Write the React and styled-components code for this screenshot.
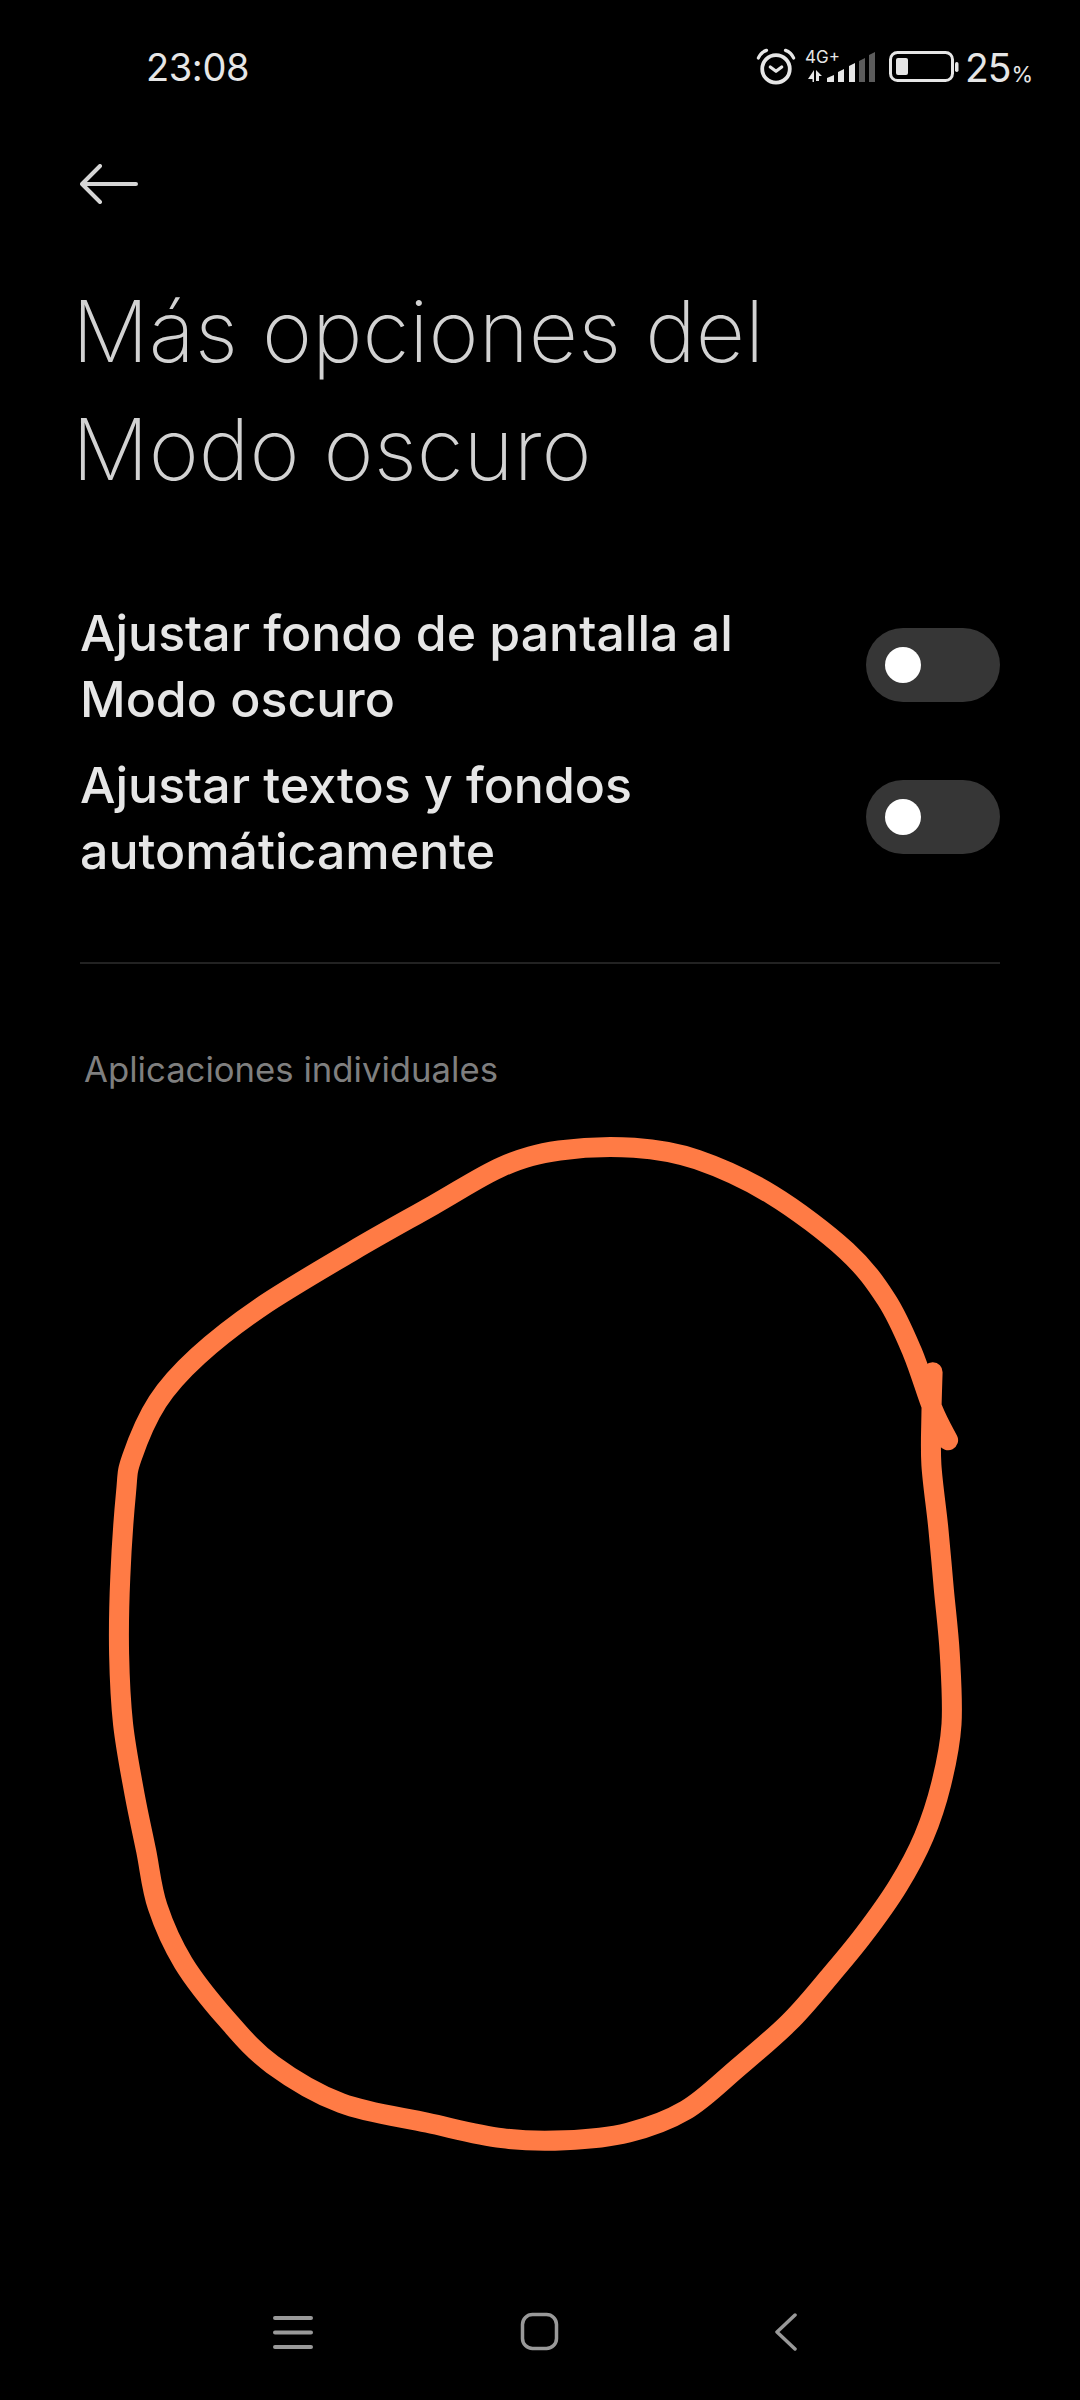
import React from "react";
import styled, { createGlobalStyle } from "styled-components";

const Global = createGlobalStyle`
  html, body { margin: 0; padding: 0; background: #000; }
  #root { width: 1080px; height: 2400px; }
`;

const FONT = `Inter, "Noto Sans", "Liberation Sans", sans-serif`;

const Page = styled.div`
  position: relative;
  width: 1080px;
  height: 2400px;
  background: #000;
  font-family: ${FONT};
  display: flex;
  flex-direction: column;
  overflow: hidden;
`;

const StatusBar = styled.div`
  height: 134px;
  padding: 0 48px 0 146px;
  box-sizing: border-box;
  display: flex;
  align-items: center;
  justify-content: space-between;
  color: #e6e6e6;
`;

const Clock = styled.span`
  font-size: 38px;
  font-weight: 400;
  letter-spacing: -0.4px;
`;

const StatusIcons = styled.div`
  display: flex;
  align-items: center;
`;

const Percent = styled.span`
  font-size: 39px;
  font-weight: 400;
  letter-spacing: -1px;
  margin-left: 6px;
  & > small {
    font-size: 22px;
    margin-left: 1px;
  }
`;

const BackRow = styled.div`
  height: 98px;
  padding: 2px 0 0 80px;
  box-sizing: border-box;
  display: flex;
  align-items: center;
`;

const Title = styled.h1`
  margin: 40px 0 0 72px;
  font-size: 85.5px;
  line-height: 118px;
  font-weight: 200;
  color: #d2d2d2;
`;

const Options = styled.div`
  margin-top: 92px;
  padding: 0 80px;
  display: flex;
  flex-direction: column;
  gap: 20px;
`;

const Option = styled.div`
  display: flex;
  align-items: center;
  justify-content: space-between;
`;

const OptionText = styled.div`
  font-size: 50px;
  line-height: 66px;
  font-weight: 500;
  color: #e6e6e6;
`;

const Toggle = styled.div`
  width: 134px;
  height: 74px;
  margin-bottom: 2px;
  border-radius: 37px;
  background: #363636;
  display: flex;
  align-items: center;
  padding-left: 19px;
  box-sizing: border-box;
`;

const Knob = styled.div`
  width: 36px;
  height: 36px;
  border-radius: 50%;
  background: #fff;
`;

const Divider = styled.div`
  height: 2px;
  margin: 78px 80px 0;
  background: #222;
`;

const SectionLabel = styled.div`
  margin: 83px 0 0 84px;
  font-size: 34.7px;
  line-height: 44px;
  color: #7f7f7f;
`;

const Scribble = styled.svg`
  position: absolute;
  left: 0;
  top: 0;
  width: 1080px;
  height: 2400px;
  pointer-events: none;
`;

const NavBar = styled.div`
  position: absolute;
  left: 0;
  bottom: 0;
  width: 100%;
  height: 110px;
  color: #999;
`;

const NavIcon = styled.svg`
  position: absolute;
  top: ${(p) => p.$top}px;
  left: ${(p) => p.$left}px;
`;

const zoomPts = [
  [1520, 388], [1518, 450], [1518, 520], [1530, 610], [1540, 700], [1550, 790], [1553, 890],
  [1535, 975], [1505, 1050], [1460, 1120], [1400, 1190], [1340, 1250], [1270, 1315],
  [1180, 1380], [1090, 1440], [990, 1472], [880, 1483], [770, 1480], [640, 1458], [490, 1430],
  [370, 1375], [290, 1310], [215, 1230], [170, 1150], [150, 1070], [130, 990], [110, 890],
  [103, 790], [105, 680], [115, 560], [125, 510], [170, 430], [240, 365], [350, 295], [510, 215],
  [650, 150], [770, 95], [870, 72], [1000, 68], [1110, 85], [1240, 135], [1370, 215], [1440, 285],
  [1485, 360], [1520, 440], [1547, 485],
];

function smoothPath(zp) {
  const p = zp.map(([x, y]) => [60 + x / 1.742, 1100 + y / 1.4255]);
  let d = `M${p[0][0].toFixed(1)} ${p[0][1].toFixed(1)}`;
  for (let i = 0; i < p.length - 1; i++) {
    const a = p[Math.max(i - 1, 0)], b = p[i], c = p[i + 1], e = p[Math.min(i + 2, p.length - 1)];
    d += ` C${(b[0] + (c[0] - a[0]) / 6).toFixed(1)} ${(b[1] + (c[1] - a[1]) / 6).toFixed(1)} ${(c[0] - (e[0] - b[0]) / 6).toFixed(1)} ${(c[1] - (e[1] - b[1]) / 6).toFixed(1)} ${c[0].toFixed(1)} ${c[1].toFixed(1)}`;
  }
  return d;
}

const Alarm = () => (
  <svg width="40" height="38" viewBox="0 0 42 40" fill="none" stroke="#e6e6e6" strokeLinecap="round" strokeLinejoin="round">
    <circle cx="21" cy="22" r="14.5" strokeWidth="4" />
    <path d="M15 20l6 4.5 6-4.5" strokeWidth="3.4" />
    <path d="M2.5 10.5Q5 4.5 11 2.5M39.5 10.5Q37 4.5 31 2.5" strokeWidth="3.4" />
  </svg>
);

const SignalSvg = styled.svg`
  margin: 0 0 3px 9px;
  overflow: visible;
`;

const Signal = () => (
  <SignalSvg width="70" height="36" viewBox="0 0 70 36">
    <text x="0" y="15" fontSize="17" fontFamily="Inter, sans-serif" fill="#e6e6e6">4G+</text>
    <path d="M9 22v12H7.5v-3H3zM11 22l6 6h-3v5h-3z" fill="#e6e6e6" />
    <path d="M22 34v-4l7-3v7zM33 34V24l6-3v13zM44 34V18l6-3v19z" fill="#e6e6e6" />
    <path d="M54 34V13l6-3v24zM64 34V7l6-3v30z" fill="#5c5c5c" />
  </SignalSvg>
);

const BatterySvg = styled.svg`
  margin-left: 14px;
`;

const Battery = () => (
  <BatterySvg width="70" height="32" viewBox="0 0 70 32" fill="none">
    <rect x="1.5" y="1.5" width="62" height="28" rx="7" stroke="#e6e6e6" strokeWidth="3" />
    <rect x="7" y="7" width="12" height="17" rx="2" fill="#e6e6e6" />
    <rect x="66" y="11" width="3.5" height="10" rx="1.7" fill="#e6e6e6" />
  </BatterySvg>
);

export default function App() {
  return (
    <Page>
      <Global />
      <StatusBar>
        <Clock>23:08</Clock>
        <StatusIcons>
          <Alarm />
          <Signal />
          <Battery />
          <Percent>25<small>%</small></Percent>
        </StatusIcons>
      </StatusBar>
      <BackRow>
        <svg width="58" height="40" viewBox="0 0 58 40" fill="none" stroke="#d6d6d6" strokeWidth="4" strokeLinecap="round" strokeLinejoin="round">
          <path d="M56 20H2M20 2L2 20l18 18" />
        </svg>
      </BackRow>
      <Title>Más opciones del<br />Modo oscuro</Title>
      <Options>
        <Option>
          <OptionText>Ajustar fondo de pantalla al<br />Modo oscuro</OptionText>
          <Toggle><Knob /></Toggle>
        </Option>
        <Option>
          <OptionText>Ajustar textos y fondos<br />automáticamente</OptionText>
          <Toggle><Knob /></Toggle>
        </Option>
      </Options>
      <Divider />
      <SectionLabel>Aplicaciones individuales</SectionLabel>
      <Scribble viewBox="0 0 1080 2400" fill="none">
        <path d={smoothPath(zoomPts)} stroke="#FF7B45" strokeWidth="20" strokeLinecap="round" strokeLinejoin="round" />
      </Scribble>
      <NavBar>
        <NavIcon $top={25} $left={272} width="42" height="36" viewBox="0 0 42 36" stroke="currentColor" strokeWidth="4" strokeLinecap="round">
          <path d="M3 3h36M3 17.5h36M3 32h36" />
        </NavIcon>
        <NavIcon $top={21} $left={519} width="41" height="41" viewBox="0 0 41 41" fill="none" stroke="currentColor" strokeWidth="3.5">
          <rect x="3.5" y="3.5" width="34" height="34" rx="10" />
        </NavIcon>
        <NavIcon $top={23} $left={775} width="22" height="38" viewBox="0 0 22 38" fill="none" stroke="currentColor" strokeWidth="3.5" strokeLinecap="round" strokeLinejoin="round">
          <path d="M20 2L2 19l18 17" />
        </NavIcon>
      </NavBar>
    </Page>
  );
}
